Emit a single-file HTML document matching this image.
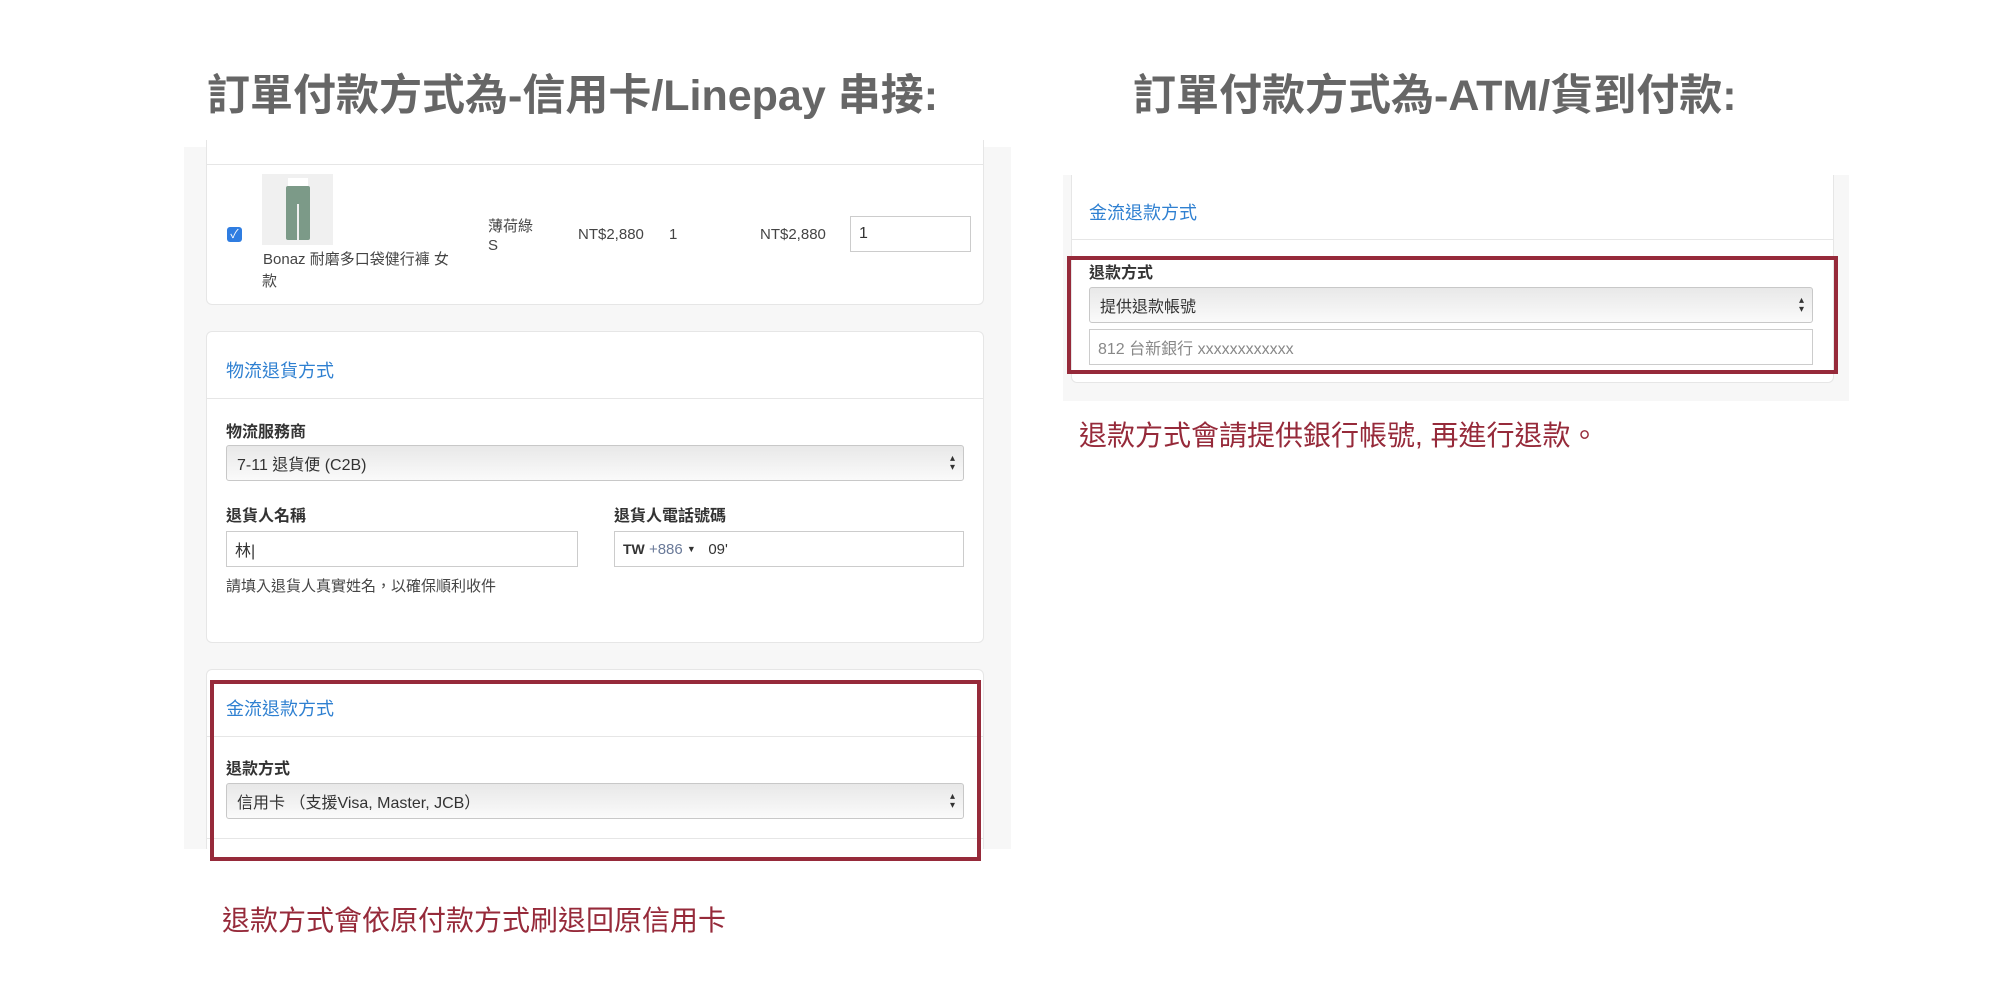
<!DOCTYPE html>
<html><head><meta charset="utf-8"><style>
*{box-sizing:border-box;margin:0;padding:0}
body{width:2000px;height:1000px;background:#fff;position:relative;font-family:"Liberation Sans","Noto Sans CJK TC",sans-serif;color:#333;overflow:hidden}
.a{position:absolute;white-space:nowrap}
.title{font-size:43px;font-weight:bold;color:#666;line-height:1}
.panel{position:absolute;background:#f7f7f7}
.card{position:absolute;background:#fff;border:1px solid #e6e6e6;border-radius:6px}
.hl{position:absolute;height:1px;background:#e6e6e6}
.blue{color:#2f80d1;font-size:18px}
.lbl{font-weight:bold;font-size:16px;color:#333}
.sel{position:absolute;border:1px solid #c8c8c8;border-radius:3px;background:linear-gradient(#e8e8e8,#fafafa);font-size:16px;padding-left:10px;display:flex;align-items:center;color:#333}
.sel:after{content:"▴\A▾";white-space:pre;position:absolute;right:8px;top:50%;transform:translateY(-50%);font-size:10px;line-height:9px;color:#333}
.inp{position:absolute;border:1px solid #ccc;background:#fff;font-size:16px;padding-left:8px;display:flex;align-items:center}
.red{position:absolute;border:4px solid #962a3a}
.cap{color:#962a3a;font-size:28px}
.sm{font-size:15px;color:#444}
</style></head><body>
<div class="a title" style="left:207px;top:75px">訂單付款方式為-信用卡/Linepay 串接:</div>
<div class="a title" style="left:1133px;top:75px">訂單付款方式為-ATM/貨到付款:</div>

<div class="panel" style="left:184px;top:147px;width:827px;height:702px"></div>
<div class="card" style="left:206px;top:140px;width:778px;height:165px;border-top:none;border-radius:0 0 6px 6px"></div>
<div class="hl" style="left:206px;top:164px;width:778px"></div>
<div class="a" style="left:227px;top:227px;width:15px;height:15px;background:#2f7de1;border-radius:3px;color:#fff;font-size:12px;text-align:center;line-height:15px">✓</div>
<div class="a" style="left:262px;top:174px;width:71px;height:71px;background:#f0f0f0">
<div style="position:absolute;left:26px;top:4px;width:20px;height:10px;background:#fff"></div>
<div style="position:absolute;left:24px;top:12px;width:24px;height:54px;background:#7c9a88;border-radius:2px"></div>
<div style="position:absolute;left:35px;top:30px;width:2px;height:36px;background:#f0f0f0"></div>
</div>
<div class="a sm" style="left:263px;top:248px">Bonaz 耐磨多口袋健行褲 女</div>
<div class="a sm" style="left:262px;top:270px">款</div>
<div class="a sm" style="left:488px;top:215px">薄荷綠</div>
<div class="a sm" style="left:488px;top:237px">S</div>
<div class="a sm" style="left:578px;top:226px">NT$2,880</div>
<div class="a sm" style="left:669px;top:226px">1</div>
<div class="a sm" style="left:760px;top:226px">NT$2,880</div>
<div class="inp" style="left:850px;top:216px;width:121px;height:36px">1</div>

<div class="card" style="left:206px;top:331px;width:778px;height:312px"></div>
<div class="a blue" style="left:226px;top:357px">物流退貨方式</div>
<div class="hl" style="left:207px;top:398px;width:776px"></div>
<div class="a lbl" style="left:226px;top:418px">物流服務商</div>
<div class="sel" style="left:226px;top:445px;width:738px;height:36px">7-11 退貨便 (C2B)</div>
<div class="a lbl" style="left:226px;top:502px">退貨人名稱</div>
<div class="a lbl" style="left:614px;top:502px">退貨人電話號碼</div>
<div class="inp" style="left:226px;top:531px;width:352px;height:36px">林|</div>
<div class="inp" style="left:614px;top:531px;width:350px;height:36px;font-size:15px"><b style="font-size:14px">TW</b>&nbsp;<span style="color:#6a7a99">+886</span>&nbsp;<span style="font-size:9px">▼</span>&nbsp;&nbsp;&nbsp;09'</div>
<div class="a sm" style="left:226px;top:575px">請填入退貨人真實姓名，以確保順利收件</div>

<div class="card" style="left:206px;top:669px;width:778px;height:185px"></div>
<div class="a blue" style="left:226px;top:695px">金流退款方式</div>
<div class="hl" style="left:207px;top:736px;width:776px"></div>
<div class="a lbl" style="left:226px;top:755px">退款方式</div>
<div class="sel" style="left:226px;top:783px;width:738px;height:36px">信用卡 （支援Visa, Master, JCB）</div>
<div class="hl" style="left:207px;top:838px;width:776px"></div>
<div class="a" style="left:184px;top:849px;width:830px;height:20px;background:#fff"></div>
<div class="red" style="left:210px;top:680px;width:771px;height:181px"></div>
<div class="a cap" style="left:222px;top:899px">退款方式會依原付款方式刷退回原信用卡</div>

<div class="panel" style="left:1063px;top:175px;width:786px;height:226px"></div>
<div class="card" style="left:1071px;top:175px;width:763px;height:208px;border-top:none;border-radius:0 0 6px 6px"></div>
<div class="a blue" style="left:1089px;top:199px">金流退款方式</div>
<div class="hl" style="left:1072px;top:239px;width:761px"></div>
<div class="a lbl" style="left:1089px;top:259px">退款方式</div>
<div class="sel" style="left:1089px;top:287px;width:724px;height:36px">提供退款帳號</div>
<div class="inp" style="left:1089px;top:329px;width:724px;height:36px;color:#888">812 台新銀行 xxxxxxxxxxxx</div>
<div class="red" style="left:1067px;top:256px;width:771px;height:118px"></div>
<div class="a cap" style="left:1079px;top:414px">退款方式會請提供銀行帳號, 再進行退款。</div>
</body></html>
